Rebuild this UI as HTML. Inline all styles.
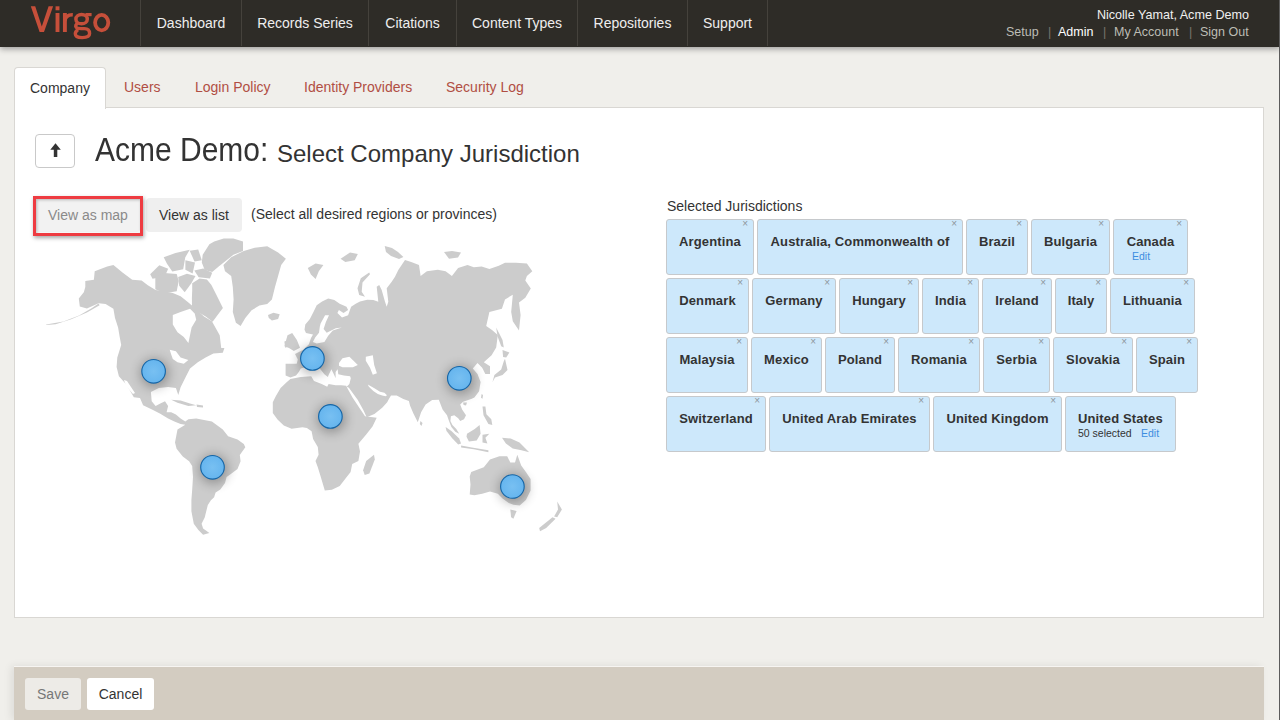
<!DOCTYPE html>
<html><head><meta charset="utf-8">
<style>
*{box-sizing:border-box;margin:0;padding:0}
html,body{width:1280px;height:720px;overflow:hidden}
body{background:#f0efeb;font-family:"Liberation Sans",sans-serif;color:#333;position:relative}
.abs{position:absolute}
#hdr{position:absolute;left:0;top:0;width:1280px;height:47px;background:#2e2c27;box-shadow:0 2px 6px rgba(0,0,0,.35);z-index:2}
#logo{position:absolute;left:31px;top:0px;font-size:35px;color:#c8513c;letter-spacing:-0.6px}
.nav{position:absolute;top:0;height:46px;border-left:1px solid #45423c;color:#eeeeee;font-size:14px;line-height:46px;text-align:center}
.user{position:absolute;right:31px;color:#f0f0f0;font-size:12.6px;text-align:right;white-space:nowrap}
.u2{position:absolute;top:25px;font-size:12.5px;color:#bdbdb5;white-space:nowrap}
.u2.sp{color:#77746d}
.tab{position:absolute;top:67px;height:41px;font-size:14px;line-height:40px;color:#b04e43}
#panel{position:absolute;left:14px;top:107px;width:1250px;height:511px;background:#fff;border:1px solid #d9d7d3}
#ctab{position:absolute;left:14px;top:67px;width:92px;height:42px;background:#fff;border:1px solid #d9d7d3;border-bottom:none;border-radius:4px 4px 0 0;z-index:1;color:#333;font-size:14px;line-height:40px;padding-left:15px}
#up{position:absolute;left:35px;top:134px;width:40px;height:34px;border:1px solid #c9c9c9;border-radius:4px;background:#fff}
.jb{position:absolute;height:56px;background:#cde8fb;border:1px solid #c6c9cc;border-radius:3px;font-size:13px;font-weight:bold;color:#333;white-space:nowrap}
.jb .t{position:absolute;left:0;right:0;top:14px;text-align:center;line-height:16px;letter-spacing:0.13px}
.jb .x{position:absolute;right:5px;top:-2px;font-size:10px;font-weight:normal;color:#8e969c;line-height:12px}
.edit{color:#3d8de0;font-weight:normal;font-size:10.5px}
</style></head>
<body>
<div id="hdr">
  <svg class="abs" style="left:0;top:0" width="130" height="46" viewBox="0 0 130 46"><g fill="none" stroke="#c64f3a" stroke-width="3.9">
<polygon points="30.8,6.3 35.2,6.3 41.8,26.6 48.6,6.3 53.1,6.3 44,32 39.6,32" fill="#c64f3a" stroke="none"/>
<path d="M57.5 13 V32"/><path d="M57.5 6.3 V10.3"/>
<path d="M64.9 13 V32"/><path d="M64.9 21 Q65.5 14.6 72.8 14.8" stroke-width="3.6"/>
<ellipse cx="81.6" cy="19.2" rx="5.7" ry="4.6" stroke-width="3.5"/>
<path d="M85.5 14.6 H91.6" stroke-width="3.2"/>
<path d="M78 23.2 Q74.6 25 76.2 27.4 Q77 28.6 81 28.6 H84.5 Q89.6 28.6 89.6 33.6 Q89.6 37.6 82.2 37.6 Q75.3 37.6 75.3 33.8 Q75.3 31.5 78 29.6" stroke-width="3.4"/>
<ellipse cx="101.7" cy="22.6" rx="6.6" ry="7.7" stroke-width="3.8"/>
</g></svg>
  <div class="nav" style="left:140px;width:101px">Dashboard</div>
  <div class="nav" style="left:241px;width:127px">Records Series</div>
  <div class="nav" style="left:368px;width:88px">Citations</div>
  <div class="nav" style="left:456px;width:121px">Content Types</div>
  <div class="nav" style="left:577px;width:110px">Repositories</div>
  <div class="nav" style="left:687px;width:81px;border-right:1px solid #45423c">Support</div>
  <div class="user" style="top:8px">Nicolle Yamat, Acme Demo</div>
  <div class="u2" style="left:1006px">Setup</div><div class="u2 sp" style="left:1048px">|</div>
  <div class="u2" style="left:1058px;color:#fff">Admin</div><div class="u2 sp" style="left:1103px">|</div>
  <div class="u2" style="left:1114px">My Account</div><div class="u2 sp" style="left:1189px">|</div>
  <div class="u2" style="left:1200px">Sign Out</div>
</div>

<div id="panel"></div>
<div id="ctab">Company</div>
<div class="tab" style="left:124px">Users</div>
<div class="tab" style="left:195px">Login Policy</div>
<div class="tab" style="left:304px">Identity Providers</div>
<div class="tab" style="left:446px">Security Log</div>

<div id="up"><svg width="40" height="34" style="position:absolute;left:-1px;top:-1px"><path d="M15.3 15.8 L20.5 9.2 L25.8 15.8 L22.3 15.8 L22.3 23 L18.8 23 L18.8 15.8 Z" fill="#333"/></svg></div>
<div class="abs" style="left:95px;top:134px;font-size:30px;color:#333;white-space:nowrap;transform:scaleY(1.08);transform-origin:0 27px">Acme Demo:</div><div class="abs" style="left:277px;top:140px;font-size:24px;color:#333;white-space:nowrap">Select Company Jurisdiction</div>

<div class="abs" style="left:36px;top:198px;width:104px;height:34px;background:#f2f2f2;border-radius:3px"></div>
<div class="abs" style="left:48px;top:207px;font-size:14px;color:#8a8a8a">View as map</div>
<div class="abs" style="left:146px;top:198px;width:96px;height:34px;background:#efefef;border-radius:4px"></div>
<div class="abs" style="left:159px;top:207px;font-size:14px;color:#333">View as list</div>
<div class="abs" style="left:251px;top:206px;font-size:14px;color:#333">(Select all desired regions or provinces)</div>
<div class="abs" style="left:33px;top:196px;width:110px;height:40px;border:3px solid #ee3b41;box-shadow:1px 2px 4px rgba(0,0,0,.35), inset 1px 1px 3px rgba(0,0,0,.25)"></div>

<!--MAP-->
<svg class="abs" style="left:0;top:0" width="1280" height="720" viewBox="0 0 1280 720">
<defs><radialGradient id="pg" cx="50%" cy="50%" r="50%"><stop offset="0" stop-color="#78c0f2"/><stop offset="1" stop-color="#66b5ee"/></radialGradient>
<filter id="sh" x="-100%" y="-100%" width="300%" height="300%"><feGaussianBlur stdDeviation="6"/></filter></defs>
<g fill="#cccccc">
<polygon points="46.2,324.4 63.4,321.6 79.1,315.4 91.6,308.3 98.6,303.6 99.6,305.2 86.9,312.6 71.2,319.2 55.6,324.2 46.2,325.0"/>
<polygon points="98.6,303.3 86.9,308.4 79.8,306.4 78.8,298.6 83.8,292.3 85.3,286.9 85.3,280.9 93.9,279.8 94.7,271.2 107.2,266.6 113.4,265.0 122.8,272.8 132.2,279.8 141.6,280.6 147.8,285.3 155.6,290.0 165.0,291.6 172.8,293.1 180.6,296.2 188.4,302.5 196.0,309.0 204.0,316.6 211.9,321.2 219.7,335.3 221.2,348.0 224.4,348.1 222.8,352.8 213.4,353.6 205.6,357.5 197.8,362.2 190.0,368.4 185.3,377.8 180.6,387.2 178.3,395.0 175.9,388.0 168.1,386.9 158.8,388.0 150.9,391.9 151.7,401.2 155.6,405.9 160.3,403.6 165.0,401.2 168.1,405.9 166.6,412.2 171.2,412.2 175.9,414.5 180.6,418.4 185.3,421.6 188.4,419.2 196.2,418.4 211.9,421.6 222.8,429.4 228.1,436.2 237.5,439.4 243.8,444.0 245.3,447.2 239.8,455.0 240.6,461.2 237.5,469.0 231.2,473.8 226.6,476.9 225.0,483.1 220.3,489.4 215.6,492.5 214.1,497.2 210.9,500.3 207.8,505.0 204.7,517.5 201.6,523.8 203.1,528.4 209.4,533.1 203.1,534.7 198.4,530.0 193.8,523.8 191.4,511.2 191.4,500.3 192.2,489.4 193.0,476.9 192.2,465.9 189.1,461.2 182.8,456.6 176.6,448.8 175.0,442.5 177.5,429.4 185.3,424.7 180.6,423.9 174.4,421.6 168.1,418.4 160.3,413.8 152.5,409.8 143.1,405.2 140.0,398.1 133.8,397.3 129.8,390.3 125.2,383.3 118.9,376.2 116.6,366.9 117.3,357.5 121.2,345.0 119.7,336.9 118.1,327.5 115.0,318.1 113.4,308.8 105.6,304.0"/>
<polygon points="201.8,262.4 202.7,254.8 209.4,244.3 214.2,241.4 223.7,238.5 233.4,238.5 243.0,241.4 243.0,250.9 233.4,254.8 223.7,262.4 219.0,266.3 212.2,272.1 204.7,270.1"/>
<polygon points="194.3,270.5 203.2,268.4 212.2,272.8 209.9,278.5 198.7,277.3"/>
<polygon points="189.7,250.7 198.2,249.4 201.8,260.3 194.5,261.6"/>
<polygon points="185.4,260.3 195.0,262.6 192.6,273.4 185.4,269.8"/>
<polygon points="163.7,257.3 175.5,253.0 189.7,249.8 185.3,257.3 183.2,269.3 172.3,271.4 167.0,263.8"/>
<polygon points="150.2,274.2 159.3,265.3 168.2,268.7 164.8,276.5 152.5,278.8"/>
<polygon points="155.3,277.0 164.5,273.0 176.7,273.9 178.7,281.0 176.7,291.3 164.5,293.2 155.3,289.2"/>
<polygon points="178.2,277.0 186.9,273.7 195.5,276.0 191.2,283.5 184.7,292.2 179.2,285.7"/>
<polygon points="192.2,283.3 199.6,278.6 206.9,279.5 211.4,285.0 216.1,294.3 222.9,308.0 217.8,314.8 212.6,321.8 205.7,316.6 197.1,311.4 192.0,306.3 191.9,297.9 192.2,290.5"/>
<polygon points="223.4,265.0 231.2,257.2 243.8,250.9 254.7,247.8 267.2,246.2 278.1,252.5 285.9,258.8 281.2,265.0 278.1,275.9 275.0,286.9 271.9,299.4 267.2,304.0 259.4,305.6 251.6,310.3 245.3,318.1 240.6,325.9 235.9,322.8 232.8,311.9 233.6,299.4 232.8,286.9 231.2,275.9 225.0,271.2"/>
<polygon points="268.0,315.0 273.4,312.7 279.7,314.2 278.1,318.9 271.9,320.5 268.8,318.1"/>
<polygon points="307.8,268.1 315.6,263.4 323.4,265.0 318.8,271.2 315.6,279.1 310.9,274.4"/>
<polygon points="340.6,258.8 350.0,252.5 357.8,254.0 354.7,260.3 345.3,261.9"/>
<polygon points="369.2,272.5 360.8,278.3 357.5,288.3 359.2,295.0 365.0,296.7 361.7,291.7 362.5,282.5 370.0,274.2"/>
<polygon points="384.7,246.0 392.0,248.0 398.0,252.0 403.4,257.0 399.0,259.0 391.0,256.0 386.0,252.0"/>
<polygon points="444.0,252.0 452.0,251.0 461.0,252.5 458.0,257.5 449.0,258.8"/>
<polygon points="287.5,335.3 292.2,333.0 296.9,340.0 300.0,347.8 293.8,351.0 289.0,348.0 284.4,346.2"/>
<polygon points="284.4,341.6 289.0,340.0 289.0,346.2 285.2,347.8"/>
<polygon points="285.6,375.6 285.6,363.8 296.7,363.8 297.8,359.4 295.0,353.9 303.3,349.7 308.9,344.2 311.0,338.0 313.0,334.5 306.0,333.0 304.5,329.7 305.3,324.4 309.9,319.0 313.7,311.4 316.7,305.3 322.1,301.5 328.2,298.4 334.3,299.9 339.7,303.8 346.5,306.8 348.1,309.9 343.5,312.9 338.9,309.9 337.4,312.9 342.0,317.5 348.1,315.2 351.1,306.8 355.7,303.8 360.0,301.5 367.2,299.7 373.3,300.0 378.3,301.7 376.7,286.7 379.2,285.0 381.7,290.0 385.0,301.7 386.7,306.7 388.3,301.7 386.7,288.3 391.7,281.7 395.0,276.7 398.3,270.0 405.0,260.0 411.2,261.9 419.0,265.0 420.6,276.0 426.9,271.2 437.8,269.7 445.6,271.2 451.9,276.0 458.1,268.1 467.5,265.0 473.8,267.3 481.6,266.6 489.4,268.9 498.8,265.8 505.0,262.7 515.9,262.7 526.9,263.4 532.3,271.2 526.9,276.0 525.3,280.6 530.8,288.4 525.3,297.8 519.0,302.5 520.6,315.0 519.0,330.6 512.8,321.2 511.2,311.9 512.8,294.7 505.0,299.4 501.9,308.8 489.4,311.9 486.2,325.9 492.0,330.0 497.8,335.0 496.2,347.5 491.6,355.3 483.8,362.3 490.0,366.2 490.0,374.0 485.3,374.0 482.2,367.8 477.5,363.1 472.8,368.6 477.5,374.0 480.6,381.9 479.1,391.2 474.4,397.5 471.8,398.8 463.1,401.7 460.2,404.6 462.1,409.5 466.0,415.3 464.0,419.2 460.2,421.1 458.2,418.2 454.3,415.3 450.9,416.3 450.4,421.1 452.4,425.0 456.3,428.9 459.2,433.8 455.3,431.8 451.4,427.0 449.0,421.1 447.0,415.3 442.6,409.5 438.8,399.7 432.2,400.0 425.6,404.4 421.1,412.2 417.8,422.2 413.3,413.3 410.0,405.6 408.9,401.1 403.3,398.9 396.7,395.6 391.0,395.5 388.9,398.9 387.2,402.2 382.2,407.8 374.4,413.9 366.7,417.2 363.3,410.0 357.8,400.0 348.9,387.8 346.7,386.7 349.4,383.9 350.8,378.3 350.1,376.2 343.9,375.6 338.3,374.2 337.6,369.3 335.6,372.0 335.6,378.3 334.2,374.9 331.4,369.3 328.6,374.9 327.9,377.0 324.4,374.2 321.0,370.0 318.0,366.5 310.3,365.7 300.8,368.6 298.8,372.1 296.0,375.6 290.4,377.6"/>
<polygon points="496.2,327.5 502.5,340.0 503.8,347.5 501.2,346.2 497.5,336.2"/>
<polygon points="420.5,421.0 422.5,423.0 421.5,426.0 419.8,424.0"/>
<polygon points="481.6,393.9 483.0,394.9 482.5,398.8 481.0,397.8"/>
<polygon points="482.5,406.5 485.4,406.5 486.4,414.3 491.3,419.2 492.3,425.0 488.4,424.0 483.5,415.3"/>
<polygon points="467.0,433.8 474.7,428.9 479.6,425.0 480.6,433.8 476.7,440.6 468.9,441.6 466.5,436.7"/>
<polygon points="445.6,427.0 451.4,430.9 459.2,438.6 461.1,443.5 458.2,444.5 452.4,438.6 446.5,430.9"/>
<polygon points="461.1,445.4 471.8,447.4 488.4,450.3 488.4,452.3 473.8,449.3 461.1,447.4"/>
<polygon points="482.5,434.7 489.3,433.8 485.4,437.7 487.4,443.5 482.5,442.5"/>
<polygon points="502.0,437.7 510.7,438.6 519.5,442.5 529.2,452.3 521.4,450.3 512.7,448.4 505.9,443.5"/>
<polygon points="171.2,399.7 180.6,400.5 190.0,403.6 196.2,405.2 188.4,406.0 177.5,402.8"/>
<polygon points="196.5,404.5 203.0,405.5 203.0,407.5 197.0,407.0"/>
<polygon points="286.9,381.9 280.6,388.1 275.9,395.9 272.8,402.2 272.8,413.1 277.5,419.4 283.8,425.6 291.6,428.8 302.5,427.2 306.9,428.1 311.6,431.2 313.1,439.1 317.8,446.9 318.6,454.7 315.5,460.9 317.8,467.2 320.2,475.0 322.5,482.8 324.8,490.6 331.9,489.8 339.7,486.0 345.9,478.1 350.6,471.9 352.2,464.0 358.4,460.9 360.0,451.6 358.4,443.8 366.2,434.4 372.5,426.6 376.7,417.8 365.0,416.2 358.8,406.9 352.5,397.5 347.8,388.9 346.2,385.8 341.1,385.3 335.6,385.3 328.6,383.9 327.2,386.7 321.7,383.9 314.0,381.1 311.2,376.2 300.8,377.0 290.4,379.0"/>
<polygon points="374.0,454.7 374.8,459.4 369.4,473.4 364.7,475.0 363.1,470.3 366.2,460.9"/>
<polygon points="471.2,471.9 483.8,467.2 490.0,459.4 499.4,456.2 507.2,456.2 510.3,462.5 515.0,462.5 517.3,454.7 521.2,465.6 525.9,471.9 530.6,478.9 530.6,490.6 525.9,500.0 519.7,505.5 513.4,504.7 508.8,503.1 502.5,498.4 497.8,493.8 490.0,491.4 482.2,493.8 474.4,495.3 469.7,494.5 470.5,484.4 469.7,476.6"/>
<polygon points="510.3,509.4 516.6,511.0 513.4,518.8 511.1,517.2"/>
<polygon points="557.2,501.6 561.9,509.4 557.2,517.2 554.1,516.4 558.0,509.4"/>
<polygon points="552.5,517.2 555.6,518.8 546.2,528.1 540.0,531.2 539.2,528.1"/>
<polygon points="463.1,402.6 467.0,402.6 466.0,405.6 463.6,405.1"/>
<polygon points="502.5,350.0 509.4,352.5 506.2,357.5 503.1,356.9"/>
<polygon points="505.0,358.8 507.5,370.0 502.5,375.0 495.0,377.5 492.5,381.9 494.4,375.0 501.2,369.4 503.8,361.2"/>
</g><g fill="#ffffff">
<polygon points="172.8,315.0 180.6,311.9 190.0,308.8 194.7,313.4 196.2,319.7 191.6,327.5 190.0,335.3 188.4,343.1 183.8,336.9 177.5,332.2 172.8,324.4"/>
<polygon points="169.7,349.7 175.9,351.2 180.6,357.5 188.4,360.0 183.8,363.8 177.5,362.2 172.8,359.0 171.2,354.4"/>
<polygon points="312.9,342.0 315.2,337.4 319.0,332.8 319.8,326.7 320.6,323.6 325.1,315.2 329.0,315.2 325.9,322.1 323.6,329.0 326.7,332.8 335.8,328.2 341.9,327.4 332.8,330.5 328.2,335.8 324.4,342.0 316.7,343.5"/>
<polygon points="339.0,363.0 342.5,358.2 349.4,356.8 357.8,365.1 352.9,367.2 342.5,367.2 339.0,365.8"/>
<polygon points="365.8,356.7 372.8,355.3 374.2,365.0 376.9,373.3 372.8,374.7 370.0,367.8 365.8,360.8"/>
<polygon points="124.0,380.0 127.0,381.0 135.0,393.0 133.0,394.0 126.0,386.0"/>
<polygon points="367.8,384.4 374.4,388.3 380.0,391.7 384.4,392.8 387.0,395.2 385.6,396.2 382.2,395.6 377.8,393.9 373.3,391.1 368.9,386.7"/>
</g>
<circle cx="154.6" cy="373.3" r="14" fill="#000" opacity="0.30" filter="url(#sh)"/>
<circle cx="313.4" cy="360.4" r="14" fill="#000" opacity="0.30" filter="url(#sh)"/>
<circle cx="331.4" cy="418.4" r="14" fill="#000" opacity="0.30" filter="url(#sh)"/>
<circle cx="460.3" cy="380.3" r="14" fill="#000" opacity="0.30" filter="url(#sh)"/>
<circle cx="213.5" cy="469.3" r="14" fill="#000" opacity="0.30" filter="url(#sh)"/>
<circle cx="513.4" cy="488.5" r="14" fill="#000" opacity="0.30" filter="url(#sh)"/>
<circle cx="153.6" cy="371.3" r="11.8" fill="url(#pg)" stroke="#1565a6" stroke-width="1.1"/>
<circle cx="312.4" cy="358.4" r="11.8" fill="url(#pg)" stroke="#1565a6" stroke-width="1.1"/>
<circle cx="330.4" cy="416.4" r="11.8" fill="url(#pg)" stroke="#1565a6" stroke-width="1.1"/>
<circle cx="459.3" cy="378.3" r="11.8" fill="url(#pg)" stroke="#1565a6" stroke-width="1.1"/>
<circle cx="212.5" cy="467.3" r="11.8" fill="url(#pg)" stroke="#1565a6" stroke-width="1.1"/>
<circle cx="512.4" cy="486.5" r="11.8" fill="url(#pg)" stroke="#1565a6" stroke-width="1.1"/>
</svg>
<!--/MAP-->

<div class="abs" style="left:667px;top:198px;font-size:14px;color:#333">Selected Jurisdictions</div>
<!--BOXES-->
<div class="jb" style="left:666px;top:219px;width:88px"><div class="t">Argentina</div><div class="x">&#215;</div></div>
<div class="jb" style="left:757px;top:219px;width:206px"><div class="t">Australia, Commonwealth of</div><div class="x">&#215;</div></div>
<div class="jb" style="left:966px;top:219px;width:62px"><div class="t">Brazil</div><div class="x">&#215;</div></div>
<div class="jb" style="left:1031px;top:219px;width:79px"><div class="t">Bulgaria</div><div class="x">&#215;</div></div>
<div class="jb" style="left:1113px;top:219px;width:75px"><div class="t">Canada</div><div class="edit abs" style="left:18px;top:30px">Edit</div><div class="x">&#215;</div></div>
<div class="jb" style="left:666px;top:278px;width:83px"><div class="t">Denmark</div><div class="x">&#215;</div></div>
<div class="jb" style="left:752px;top:278px;width:84px"><div class="t">Germany</div><div class="x">&#215;</div></div>
<div class="jb" style="left:839px;top:278px;width:80px"><div class="t">Hungary</div><div class="x">&#215;</div></div>
<div class="jb" style="left:922px;top:278px;width:57px"><div class="t">India</div><div class="x">&#215;</div></div>
<div class="jb" style="left:982px;top:278px;width:70px"><div class="t">Ireland</div><div class="x">&#215;</div></div>
<div class="jb" style="left:1055px;top:278px;width:52px"><div class="t">Italy</div><div class="x">&#215;</div></div>
<div class="jb" style="left:1110px;top:278px;width:85px"><div class="t">Lithuania</div><div class="x">&#215;</div></div>
<div class="jb" style="left:666px;top:337px;width:82px"><div class="t">Malaysia</div><div class="x">&#215;</div></div>
<div class="jb" style="left:751px;top:337px;width:71px"><div class="t">Mexico</div><div class="x">&#215;</div></div>
<div class="jb" style="left:825px;top:337px;width:70px"><div class="t">Poland</div><div class="x">&#215;</div></div>
<div class="jb" style="left:898px;top:337px;width:82px"><div class="t">Romania</div><div class="x">&#215;</div></div>
<div class="jb" style="left:983px;top:337px;width:67px"><div class="t">Serbia</div><div class="x">&#215;</div></div>
<div class="jb" style="left:1053px;top:337px;width:80px"><div class="t">Slovakia</div><div class="x">&#215;</div></div>
<div class="jb" style="left:1136px;top:337px;width:62px"><div class="t">Spain</div><div class="x">&#215;</div></div>
<div class="jb" style="left:666px;top:396px;width:100px"><div class="t">Switzerland</div><div class="x">&#215;</div></div>
<div class="jb" style="left:769px;top:396px;width:161px"><div class="t">United Arab Emirates</div><div class="x">&#215;</div></div>
<div class="jb" style="left:933px;top:396px;width:129px"><div class="t">United Kingdom</div><div class="x">&#215;</div></div>
<div class="jb" style="left:1065px;top:396px;width:111px"><div class="t" style="text-align:left;left:12px">United States</div><div class="abs" style="left:12px;top:30px;font-size:10.5px;font-weight:normal">50 selected</div><div class="edit abs" style="left:75px;top:30px">Edit</div></div>
<!--/BOXES-->

<div class="abs" style="left:14px;top:666px;width:1250px;height:54px;background:#d3ccc1;border-top:1px solid #f7f5f2;box-shadow:-3px 0 8px rgba(0,0,0,.08)"></div>
<div class="abs" style="left:25px;top:678px;width:56px;height:32px;background:#edebe7;border-radius:3px;color:#777;font-size:14px;line-height:32px;text-align:center">Save</div>
<div class="abs" style="left:87px;top:678px;width:67px;height:32px;background:#fff;border-radius:3px;color:#333;font-size:14px;line-height:32px;text-align:center">Cancel</div>
<div class="abs" style="left:1279px;top:0;width:1px;height:720px;background:#5c5c5c;z-index:5"></div>
</body></html>
